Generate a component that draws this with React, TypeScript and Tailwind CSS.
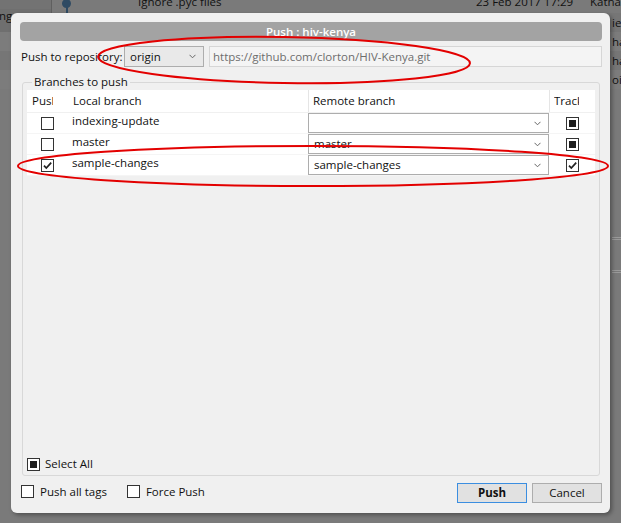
import React from "react";

function Box({ state }: { state: "off" | "on" | "mixed" }) {
  return (
    <div className="w-[13px] h-[13px] border border-[#333333] bg-white flex items-center justify-center shrink-0">
      {state === "mixed" && <div className="w-[7px] h-[7px] bg-[#1e1e1e]" />}
      {state === "on" && (
        <svg width="11" height="11" viewBox="0 0 11 11">
          <path d="M2 5.6 L4.3 8 L9.2 2.6" fill="none" stroke="#222" strokeWidth="1.7" />
        </svg>
      )}
    </div>
  );
}

function Chevron() {
  return (
    <svg width="7" height="5" viewBox="0 0 7 5" className="shrink-0">
      <path d="M0.5 0.8 L3.5 3.8 L6.5 0.8" fill="none" stroke="#666" strokeWidth="1" />
    </svg>
  );
}

function Combo({ value }: { value: string }) {
  return (
    <div className="h-[20px] w-full border border-[#adadad] bg-white flex items-center justify-between pl-[5px] pr-[7px]">
      <span>{value}</span>
      <Chevron />
    </div>
  );
}

const rows = [
  { name: "indexing-update", remote: "", push: "off" as const, track: "mixed" as const },
  { name: "master", remote: "master", push: "off" as const, track: "mixed" as const },
  { name: "sample-changes", remote: "sample-changes", push: "on" as const, track: "on" as const },
];

function RightLine() {
  return (
    <div className="flex justify-end h-[1px]">
      <div className="w-[9px] bg-[#9a9a9a]" />
    </div>
  );
}

export default function App() {
  return (
    <div className="relative w-[621px] h-[523px] overflow-hidden bg-[#7a7a7a] font-['Open_Sans',sans-serif] text-[11.5px] text-[#111]">
      {/* background application */}
      <div className="flex flex-col">
        <div className="flex h-[13px] overflow-hidden">
          <div className="w-[52px] shrink-0 bg-[#737373] border-r border-[#5f5f5f]" />
          <div className="relative w-[24px] shrink-0">
            <div className="absolute left-[10px] top-[-1px] w-[9px] h-[9px] rounded-full bg-[#2e4a63]" />
            <div className="absolute left-[13.5px] top-[6px] w-[2px] h-[7px] bg-[#2e4a63]" />
          </div>
          <div className="w-[62px] shrink-0" />
          <div className="w-[338px] shrink-0 leading-[13px] mt-[-5px]">Ignore .pyc files</div>
          <div className="w-[114px] shrink-0 leading-[13px] mt-[-5px]">23 Feb 2017 17:29</div>
          <div className="leading-[13px] mt-[-5px]">Katha</div>
        </div>
        <div className="flex h-[19px] bg-[#767676]">
          <div className="w-[52px] shrink-0 leading-[13px] bg-[#6f6f6f] ml-[-1px] mt-[-4px]">nges</div>
          <div className="flex-1" />
          <div className="w-[9px] leading-[19px]">ie</div>
        </div>
        <div className="flex h-[19px] bg-[#7c7c7c] justify-end">
          <div className="w-[9px] leading-[19px]">ha</div>
        </div>
        <div className="flex h-[19px] bg-[#767676] justify-end">
          <div className="w-[9px] leading-[19px]">ha</div>
        </div>
        <div className="flex h-[19px] bg-[#7c7c7c] justify-end">
          <div className="w-[9px] leading-[19px]">oi</div>
        </div>
        <div className="h-[148px]" />
        <RightLine />
        <div className="h-[1px]" />
        <RightLine />
        <div className="h-[30px]" />
        <RightLine />
        <div className="h-[1px]" />
        <RightLine />
        <div className="flex h-[240px]">
          <div className="w-[52px] border-r border-[#5f5f5f] h-full" />
          <div className="w-[461px] border-r border-[#5f5f5f] h-full" />
        </div>
      </div>

      {/* dialog */}
      <div className="absolute left-[11px] top-[13px] w-[599px] h-[500px] rounded-[6px] bg-[#f0f0f0] shadow-[2px_2px_4px_rgba(0,0,0,0.35)] pl-[9px] pr-[8px] pt-[9px] flex flex-col">
        <div className="h-[19px] rounded-[4px] bg-[#a3a3a3] text-white text-center leading-[19px] font-semibold">
          Push : hiv-kenya
        </div>

        <div className="mt-[5px] h-[21px] flex items-center">
          <span className="pl-[1px] w-[104px]">Push to repository:</span>
          <div className="w-[80px] h-[21px] border border-[#adadad] bg-[#e9e9e9] flex items-center justify-between pl-[5px] pr-[7px]">
            <span>origin</span>
            <Chevron />
          </div>
          <div className="ml-[5px] flex-1 h-[21px] border border-[#d6d6d6] bg-[#f4f4f4] text-[#6d6d6d] flex items-center pl-[3px]">
            https://github.com/clorton/HIV-Kenya.git
          </div>
        </div>

        <fieldset className="mt-[7px] mx-[2px] h-[402px] border border-[#d8d8d8] rounded-[3px] px-[4px] pb-[3px] min-w-0">
          <legend className="ml-[5px] px-[2px] leading-[16px]">Branches to push</legend>
          <div className="flex flex-col h-[382px]">
            <div className="flex h-[23px] bg-white border-b border-[#f0f0f0] items-center">
              <div className="w-[39px] pl-[5px]">
                <div className="w-[21px] overflow-hidden whitespace-nowrap">Push</div>
              </div>
              <div className="w-[242px] pl-[7px]">Local branch</div>
              <div className="w-[241px] h-full border-l border-[#e5e5e5] flex items-center pl-[4px]">Remote branch</div>
              <div className="flex-1 h-full border-l border-[#e5e5e5] flex items-center pl-[4px]">
                <div className="w-[25px] overflow-hidden whitespace-nowrap">Track</div>
              </div>
            </div>
            {rows.map((r) => (
              <div key={r.name} className="flex h-[21px] bg-white border-b border-[#f5f5f5]">
                <div className="w-[39px] flex items-center justify-center pl-[1px]">
                  <Box state={r.push} />
                </div>
                <div className="w-[242px] pl-[6px] leading-[16px]">{r.name}</div>
                <div className="w-[241px]">
                  <Combo value={r.remote} />
                </div>
                <div className="flex-1 flex items-center justify-center pl-[1px]">
                  <Box state={r.track} />
                </div>
              </div>
            ))}
            <div className="flex-1" />
            <div className="flex items-center gap-[5px] h-[16px] mb-[0px]">
              <Box state="mixed" />
              <span>Select All</span>
            </div>
          </div>
        </fieldset>

        <div className="mt-[7px] flex items-start">
          <div className="flex items-center gap-[6px] ml-[1px]">
            <Box state="off" />
            <span>Push all tags</span>
          </div>
          <div className="flex items-center gap-[6px] ml-[20px]">
            <Box state="off" />
            <span>Force Push</span>
          </div>
          <div className="flex-1" />
          <button className="w-[70px] h-[20px] border border-[#3b8ee0] bg-[#e1e1e1] font-bold leading-[18px]">Push</button>
          <button className="ml-[5px] w-[70px] h-[20px] border border-[#adadad] bg-[#e1e1e1] leading-[18px]">Cancel</button>
        </div>
      </div>

      {/* red annotation ellipses */}
      <svg className="absolute left-0 top-0 pointer-events-none" width="621" height="523">
        <ellipse cx="284" cy="60" rx="186" ry="23" fill="none" stroke="#e30000" strokeWidth="2" transform="rotate(1 284 60)" />
        <ellipse cx="313" cy="166" rx="295" ry="20" fill="none" stroke="#e30000" strokeWidth="2" />
      </svg>
    </div>
  );
}
